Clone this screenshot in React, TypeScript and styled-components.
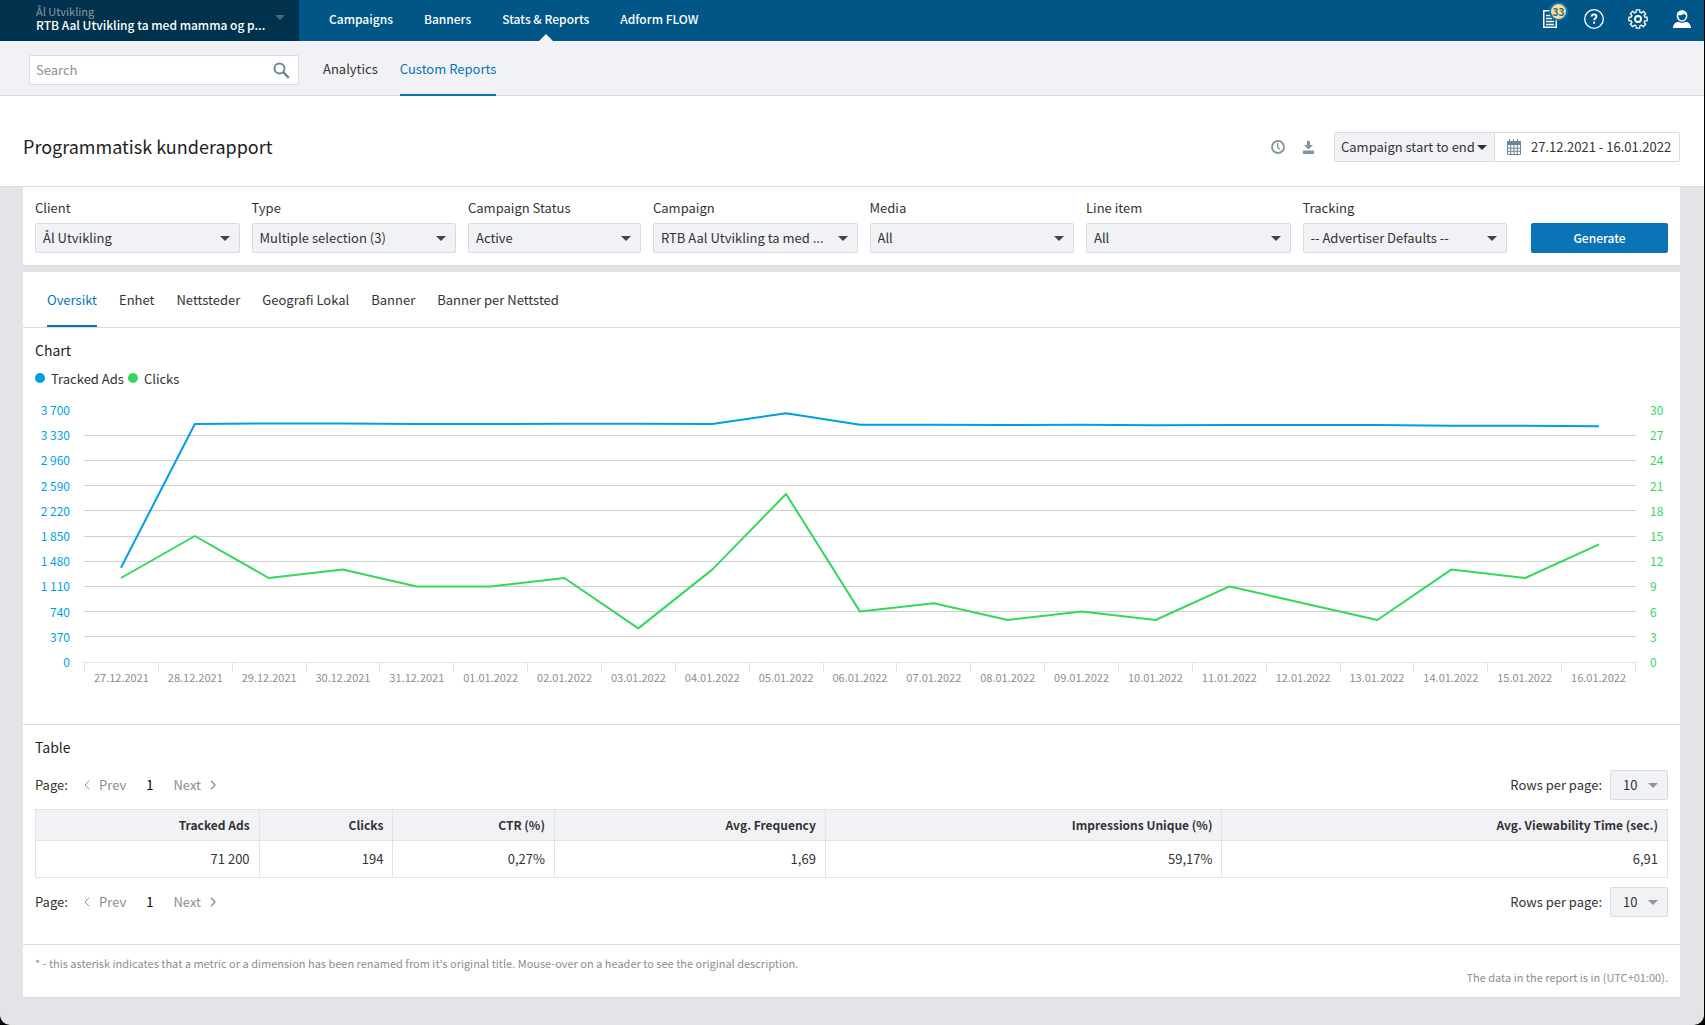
import React from "react";
import styled, { createGlobalStyle } from "styled-components";

const color = {
  nav: "#005687",
  navDark: "#00324d",
  subnav: "#f1f2f6",
  page: "#e3e4e8",
  border: "#d9dbe2",
  line: "#e1e2e6",
  accent: "#0b74b7",
  text: "#333333",
  heading: "#1e1e1e",
  muted: "#8e8e8e",
  icon: "#8197a2",
  ads: "#009fe3",
  clicks: "#37d65c",
};

const GlobalStyle = createGlobalStyle`
  *, *::before, *::after { box-sizing: border-box; }
  html, body { margin: 0; background: #000; }
  body, button, input, select {
    font-family: "Noto Sans CJK SC", "Source Sans Pro", sans-serif;
    font-size: 13px;
    line-height: 20px;
    color: ${color.text};
  }
  button, input, select { margin: 0; padding: 0; border: 0; background: none; border-radius: 0; }
  button, select { cursor: pointer; }
  a { color: inherit; text-decoration: none; }
  h1, h2, p { margin: 0; font-weight: 400; }
  svg { display: block; }
`;

const Shell = styled.div`
  display: flex;
  flex-direction: column;
  min-height: 100vh;
  margin-right: 1px;
  background: ${color.page};
  border-radius: 0 0 10px 10px;
  overflow: hidden;
`;

const TopBar = styled.header`
  display: flex;
  height: 41px;
  background: ${color.nav};
  color: #fff;
`;

const AccountButton = styled.button`
  display: flex;
  align-items: center;
  justify-content: space-between;
  width: 299px;
  padding: 0 14px 6px 36px;
  background: ${color.navDark};
  text-align: left;
  white-space: nowrap;
`;

const AccountNames = styled.span`
  display: flex;
  flex-direction: column;
`;

const AccountClient = styled.span`
  font-size: 11px;
  line-height: 14px;
  color: #8b9ba8;
`;

const AccountCampaign = styled.span`
  font-size: 12px;
  font-weight: 500;
  line-height: 14px;
  color: #fff;
`;

const MainNav = styled.nav`
  display: flex;
  flex: 1;
  gap: 31px;
  padding-left: 30px;
`;

const MainLink = styled.a<{ $active?: boolean }>`
  position: relative;
  font-size: 12px;
  font-weight: 500;
  line-height: 37px;
  &::after {
    content: "";
    display: ${(p) => (p.$active ? "block" : "none")};
    position: absolute;
    left: 50%;
    bottom: 0;
    margin-left: -7px;
    border: 7px solid transparent;
    border-top: 0;
    border-bottom-color: ${color.subnav};
  }
`;

const IconBar = styled.div`
  display: flex;
  align-items: center;
  gap: 22px;
  padding: 0 11px 3px 0;
`;

const IconButton = styled.button`
  position: relative;
  display: flex;
  align-items: center;
  justify-content: center;
  width: 22px;
  height: 22px;
  color: #fff;
`;

const Badge = styled.span`
  position: absolute;
  top: -6px;
  left: 10px;
  width: 19px;
  height: 19px;
  border: 2px solid ${color.accent};
  border-radius: 50%;
  background: #fddb8f;
  color: #1f6f8f;
  font-size: 10px;
  font-weight: 700;
  line-height: 15px;
  text-align: center;
`;

const SubBar = styled.div`
  display: flex;
  height: 55px;
  padding-left: 29px;
  background: ${color.subnav};
  border-bottom: 1px solid ${color.border};
`;

const SearchBox = styled.label`
  display: flex;
  align-items: center;
  align-self: flex-end;
  width: 270px;
  height: 30px;
  padding: 0 8px 0 6px;
  margin: 0 24px 10px 0;
  border: 1px solid ${color.border};
  border-radius: 2px;
  background: #fff;
  color: #6c8896;
`;

const SearchInput = styled.input`
  flex: 1;
  min-width: 0;
  outline: none;
  &::placeholder { color: ${color.muted}; opacity: 1; }
`;

const TabRow = styled.nav<{ $inset?: boolean }>`
  display: flex;
  gap: 22px;
  height: ${(p) => (p.$inset ? "56px" : "55px")};
  padding: ${(p) => (p.$inset ? "0 24px" : "0")};
  border-bottom: ${(p) => (p.$inset ? `1px solid ${color.border}` : "0")};
`;

const TabLink = styled.a<{ $active?: boolean }>`
  padding-top: 18px;
  border-bottom: 2px solid ${(p) => (p.$active ? color.accent : "transparent")};
  color: ${(p) => (p.$active ? color.accent : color.text)};
`;

const TitleBar = styled.div`
  display: flex;
  align-items: center;
  height: 91px;
  padding: 12px 24px 0 23px;
  background: #fff;
  border-bottom: 1px solid ${color.border};
`;

const Title = styled.h1`
  flex: 1;
  padding-bottom: 2px;
  font-size: 18px;
  line-height: 28px;
  color: ${color.heading};
`;

const ToolButton = styled.button`
  display: flex;
  align-items: center;
  justify-content: center;
  width: 20px;
  height: 20px;
  margin-right: 10px;
  color: ${color.icon};
`;

const DateGroup = styled.div`
  display: flex;
  height: 30px;
  margin-left: 6px;
  border: 1px solid ${color.border};
  border-radius: 2px;
`;

const RangeBox = styled.div`
  display: grid;
  align-items: center;
  width: 160px;
  background: ${color.subnav};
  border-right: 1px solid ${color.border};
`;

const DateButton = styled.button`
  display: flex;
  align-items: center;
  gap: 10px;
  width: 184px;
  padding-left: 12px;
  white-space: nowrap;
`;

const Body = styled.main`
  padding: 0 24px 27px 23px;
`;

const Panel = styled.section`
  background: #fff;
  border-bottom: 1px solid ${color.border};
`;

const FilterPanel = styled(Panel)`
  display: grid;
  grid-template-columns: 1fr 1fr 173px 1fr 1fr 1fr 1fr 149px;
  column-gap: 12px;
  align-items: end;
  padding: 11px 12px 12px;
  margin-bottom: 6px;
`;

const Field = styled.label`
  display: flex;
  flex-direction: column;
  gap: 5px;
  min-width: 0;
`;

const SelectBox = styled.span`
  display: grid;
  align-items: center;
  height: 30px;
  border: 1px solid ${color.border};
  border-radius: 2px;
  background: ${color.subnav};
`;

const Select = styled.select<{ $pad: number }>`
  grid-area: 1 / 1;
  width: 100%;
  height: 28px;
  min-width: 0;
  padding-left: ${(p) => p.$pad}px;
  appearance: none;
  outline: none;
`;

const Caret = styled.span<{ $tone: string; $right: number }>`
  grid-area: 1 / 1;
  justify-self: end;
  margin-right: ${(p) => p.$right}px;
  border: 5px solid transparent;
  border-top-color: ${(p) => p.$tone};
  border-bottom: 0;
  pointer-events: none;
`;

const PrimaryButton = styled.button`
  height: 30px;
  margin-left: 12px;
  border-radius: 2px;
  background: ${color.accent};
  color: #fff;
  font-size: 12px;
  font-weight: 500;
`;

const Section = styled.div<{ $bottom: number }>`
  padding: 11px 12px ${(p) => p.$bottom}px;
  border-bottom: 1px solid ${color.border};
`;

const SectionTitle = styled.h2`
  padding-bottom: 2px;
  font-size: 14px;
  line-height: 22px;
  color: ${color.heading};
`;

const Legend = styled.ul`
  display: flex;
  gap: 4px;
  margin: 0;
  padding: 5px 0 12px;
  list-style: none;
`;

const LegendItem = styled.li<{ $tone: string }>`
  display: flex;
  align-items: center;
  gap: 6px;
  line-height: 22px;
  &::before {
    content: "";
    width: 10px;
    height: 10px;
    margin-bottom: 2px;
    border-radius: 50%;
    background: ${(p) => p.$tone};
  }
`;

const ChartRow = styled.div`
  display: flex;
  gap: 14px;
`;

const AxisLabels = styled.div<{ $tone: string; $align: string; $width: number }>`
  display: flex;
  flex-direction: column;
  justify-content: space-between;
  width: ${(p) => p.$width}px;
  height: 268px;
  text-align: ${(p) => p.$align};
  font-size: 12px;
  line-height: 16px;
  white-space: nowrap;
  color: ${(p) => p.$tone};
`;

const Plot = styled.div`
  flex: 1;
  min-width: 0;
  padding-top: 8px;
`;

const PlotSvg = styled.svg`
  width: 100%;
  height: 252px;
  overflow: visible;
`;

const DateAxis = styled.div`
  display: grid;
  grid-template-columns: repeat(21, 1fr);
  border-top: 1px solid ${color.line};
  border-right: 1px solid ${color.line};
  height: 10px;
`;

const DateTick = styled.div`
  display: flex;
  justify-content: center;
  height: 9px;
  padding-top: 6px;
  border-left: 1px solid ${color.line};
  font-size: 11px;
  line-height: 16px;
  color: ${color.muted};
`;

const PagerRow = styled.div`
  display: flex;
  align-items: center;
  justify-content: space-between;
  height: 30px;
`;

const Pager = styled.nav`
  display: flex;
  align-items: center;
`;

const PageStep = styled.button`
  display: flex;
  align-items: center;
  gap: 9px;
  color: ${color.muted};
`;

const PageLabel = styled.span`
  width: 49px;
`;

const PageNumber = styled.span`
  padding: 0 20px;
  color: #000;
`;

const RowsLabel = styled.label`
  display: flex;
  align-items: center;
  gap: 8px;
`;

const RowsBox = styled(SelectBox)`
  width: 58px;
`;

const TableBlock = styled.div`
  display: flex;
  flex-direction: column;
  gap: 9px;
  padding-top: 10px;
`;

const DataTable = styled.table`
  width: 100%;
  border-collapse: collapse;
  table-layout: fixed;
`;

const cell = `
  padding: 0 9px;
  border: 1px solid ${color.line};
  text-align: right;
`;

const HeadCell = styled.th`
  ${cell}
  height: 31px;
  background: ${color.subnav};
  font-size: 12px;
  font-weight: 700;
`;

const BodyCell = styled.td`
  ${cell}
  height: 37px;
`;

const Notes = styled.footer`
  display: flex;
  flex-direction: column;
  padding: 11px 12px 13px;
  font-size: 11px;
  line-height: 14px;
  color: ${color.muted};
`;

const TimeZoneNote = styled.p`
  align-self: flex-end;
`;

const filters = [
  ["Client", "Ål Utvikling"],
  ["Type", "Multiple selection (3)"],
  ["Campaign Status", "Active"],
  ["Campaign", "RTB Aal Utvikling ta med ..."],
  ["Media", "All"],
  ["Line item", "All"],
  ["Tracking", "-- Advertiser Defaults --"],
];

const reportTabs = ["Oversikt", "Enhet", "Nettsteder", "Geografi Lokal", "Banner", "Banner per Nettsted"];

const dates = [
  "27.12.2021", "28.12.2021", "29.12.2021", "30.12.2021", "31.12.2021", "01.01.2022", "02.01.2022",
  "03.01.2022", "04.01.2022", "05.01.2022", "06.01.2022", "07.01.2022", "08.01.2022", "09.01.2022",
  "10.01.2022", "11.01.2022", "12.01.2022", "13.01.2022", "14.01.2022", "15.01.2022", "16.01.2022",
];
const ads = [
  1385, 3495, 3502, 3502, 3494, 3494, 3497, 3497, 3494, 3652, 3483, 3484, 3478, 3484, 3476, 3480, 3480, 3480,
  3467, 3467, 3463,
];
const clicks = [10, 15, 10, 11, 9, 9, 10, 4, 11, 20, 6, 7, 5, 6, 5, 9, 7, 5, 11, 10, 14];
const adsTicks = ["3 700", "3 330", "2 960", "2 590", "2 220", "1 850", "1 480", "1 110", "740", "370", "0"];
const clickTicks = [30, 27, 24, 21, 18, 15, 12, 9, 6, 3, 0];

const columns: [string, string, string][] = [
  ["Tracked Ads", "71 200", "13.7%"],
  ["Clicks", "194", "8.2%"],
  ["CTR (%)", "0,27%", "9.9%"],
  ["Avg. Frequency", "1,69", "16.6%"],
  ["Impressions Unique (%)", "59,17%", "24.3%"],
  ["Avg. Viewability Time (sec.)", "6,91", "27.3%"],
];

const PLOT_W = 2100;
const PLOT_H = 252;

function series(values: number[], max: number) {
  const step = PLOT_W / values.length;
  return values.map((v, i) => `${(i + 0.5) * step},${PLOT_H - (v / max) * PLOT_H}`).join(" ");
}

function Dropdown({ value }: { value: string }) {
  return (
    <SelectBox>
      <Select $pad={7} defaultValue={value}>
        <option>{value}</option>
      </Select>
      <Caret $tone="#444" $right={9} />
    </SelectBox>
  );
}

function Chart() {
  return (
    <ChartRow>
      <AxisLabels $tone={color.ads} $align="right" $width={35}>
        {adsTicks.map((t) => <span key={t}>{t}</span>)}
      </AxisLabels>
      <Plot>
        <PlotSvg viewBox={`0 0 ${PLOT_W} ${PLOT_H}`} preserveAspectRatio="none" role="img" aria-label="Tracked Ads and Clicks per day">
          {clickTicks.slice(1, 10).map((t) => {
            const y = Math.floor(PLOT_H - (t / 30) * PLOT_H) + 0.5;
            return (
              <line key={t} x1="0" x2={PLOT_W} y1={y} y2={y} stroke="#cfcfd1" vectorEffect="non-scaling-stroke" />
            );
          })}
          <polyline points={series(ads, 3700)} fill="none" stroke={color.ads} strokeWidth="2" strokeLinejoin="round" vectorEffect="non-scaling-stroke" />
          <polyline points={series(clicks, 30)} fill="none" stroke={color.clicks} strokeWidth="2" strokeLinejoin="round" vectorEffect="non-scaling-stroke" />
        </PlotSvg>
        <DateAxis>
          {dates.map((d) => <DateTick key={d}>{d}</DateTick>)}
        </DateAxis>
      </Plot>
      <AxisLabels $tone={color.clicks} $align="left" $width={18}>
        {clickTicks.map((t) => <span key={t}>{t}</span>)}
      </AxisLabels>
    </ChartRow>
  );
}

function Paging() {
  return (
    <PagerRow>
      <Pager aria-label="Pages">
        <PageLabel>Page:</PageLabel>
        <PageStep>
          <svg width="6" height="10" viewBox="0 0 6 10" fill="none" stroke="currentColor"><path d="M5 .8 1 5l4 4.200" /></svg>
          Prev
        </PageStep>
        <PageNumber>1</PageNumber>
        <PageStep>
          Next
          <svg width="6" height="10" viewBox="0 0 6 10" fill="none" stroke="currentColor"><path d="m1 .8 4 4.200-4 4.200" strokeWidth="1.300" /></svg>
        </PageStep>
      </Pager>
      <RowsLabel>
        Rows per page:
        <RowsBox>
          <Select $pad={12} defaultValue="10">
            <option>10</option>
          </Select>
          <Caret $tone="#949494" $right={9} />
        </RowsBox>
      </RowsLabel>
    </PagerRow>
  );
}

const gearPath = (() => {
  const pts: string[] = [];
  for (let i = 0; i < 8; i++) {
    const a = (i * Math.PI) / 4;
    ([[-0.27, 7], [-0.19, 9.3], [0.19, 9.3], [0.27, 7]] as [number, number][]).forEach(([d, r]) => {
      pts.push(`${(11 + r * Math.sin(a + d)).toFixed(2)} ${(11 - r * Math.cos(a + d)).toFixed(2)}`);
    });
  }
  return `M${pts.join("L")}Z`;
})();

export default function App() {
  return (
    <>
      <GlobalStyle />
      <Shell>
        <TopBar>
          <AccountButton>
            <AccountNames>
              <AccountClient>Ål Utvikling</AccountClient>
              <AccountCampaign>RTB Aal Utvikling ta med mamma og p...</AccountCampaign>
            </AccountNames>
            <Caret $tone="#44687e" $right={0} />
          </AccountButton>
          <MainNav>
            <MainLink href="#campaigns">Campaigns</MainLink>
            <MainLink href="#banners">Banners</MainLink>
            <MainLink href="#stats" $active>Stats &amp; Reports</MainLink>
            <MainLink href="#flow">Adform FLOW</MainLink>
          </MainNav>
          <IconBar>
            <IconButton aria-label="Notifications">
              <svg width="14" height="18" viewBox="0 0 14 18" fill="none" stroke="currentColor">
                <path d="M.75.75h12.500v16.500H.75z" strokeWidth="1.500" />
                <path d="M3 5.500h5M3 8.500h6M3 11.500h8M3 14.500h8" strokeWidth="1.500" />
              </svg>
              <Badge>33</Badge>
            </IconButton>
            <IconButton aria-label="Help">
              <svg width="22" height="22" viewBox="0 0 22 22" fill="none" stroke="currentColor">
                <circle cx="11" cy="11" r="9.300" strokeWidth="1.300" />
                <path d="M8.500 8.600c.2-1.500 1.200-2.200 2.500-2.200 1.400 0 2.400.8 2.400 2 0 1.700-2.300 1.900-2.300 3.900" strokeWidth="1.900" />
                <path d="M11.100 13.700v2" strokeWidth="2" />
              </svg>
            </IconButton>
            <IconButton aria-label="Settings">
              <svg width="22" height="22" viewBox="0 0 22 22" fill="none" stroke="currentColor">
                <path d={gearPath} strokeWidth="1.300" strokeLinejoin="round" />
                <circle cx="11" cy="11" r="3" strokeWidth="1.800" />
              </svg>
            </IconButton>
            <IconButton aria-label="Profile">
              <svg width="18" height="18" viewBox="0 0 18 18" fill="currentColor">
                <path d="M9 .3c3.200 0 5.300 2.300 5.300 5.400S12.200 11.500 9 11.500 3.700 8.800 3.700 5.700 5.800.3 9 .3Z" />
                <path d="M5.200 5.200c2.700.3 4.600-.2 6-1.700.5 1 1.200 1.500 1.900 1.700-.1 3-1.700 5.100-4.100 5.100S5.300 8.200 5.200 5.200Z" fill={color.nav} />
                <path d="M0 18c0-3.700 2.200-5.500 5.200-6.300 2.300 1.300 5.300 1.300 7.600 0C15.800 12.500 18 14.300 18 18Z" />
              </svg>
            </IconButton>
          </IconBar>
        </TopBar>

        <SubBar>
          <SearchBox>
            <SearchInput type="search" placeholder="Search" aria-label="Search" />
            <svg width="17" height="17" viewBox="0 0 17 17" fill="none" stroke="currentColor">
              <circle cx="6.500" cy="6.500" r="5" strokeWidth="2" />
              <path d="m10.200 10.200 5.600 5.600" strokeWidth="2.400" />
            </svg>
          </SearchBox>
          <TabRow>
            <TabLink href="#analytics">Analytics</TabLink>
            <TabLink href="#custom" $active>Custom Reports</TabLink>
          </TabRow>
        </SubBar>

        <TitleBar>
          <Title>Programmatisk kunderapport</Title>
          <ToolButton aria-label="Schedule">
            <svg width="14" height="14" viewBox="0 0 14 14" fill="none" stroke="currentColor">
              <circle cx="7" cy="7" r="6" strokeWidth="1.800" />
              <path d="M6.700 3v4.300l2.200 2.200" strokeWidth="1.400" />
            </svg>
          </ToolButton>
          <ToolButton aria-label="Download">
            <svg width="11" height="13" viewBox="0 0 11 13" fill="currentColor">
              <path d="M4 0h3v4h3L5.500 8.500 1 4h3zM0 9.500h11V13H0z" />
            </svg>
          </ToolButton>
          <DateGroup>
            <RangeBox>
              <Select $pad={6} aria-label="Period" defaultValue="Campaign start to end">
                <option>Campaign start to end</option>
              </Select>
              <Caret $tone="#333" $right={7} />
            </RangeBox>
            <DateButton>
              <svg width="14" height="16" viewBox="0 0 14 16" fill="#6c8896">
                <path d="M0 2h2V0h1v2h3V0h1v2h3V0h1v2h3v4H0z" />
                <path d="M.5 6v9.500h13V6M3.700 5v10M7 5v10M10.300 5v10M0 9.200h14M0 12.300h14" fill="none" stroke="#6c8896" />
              </svg>
              27.12.2021 - 16.01.2022
            </DateButton>
          </DateGroup>
        </TitleBar>

        <Body>
          <FilterPanel>
            {filters.map(([label, value]) => (
              <Field key={label}>
                {label}
                <Dropdown value={value} />
              </Field>
            ))}
            <PrimaryButton>Generate</PrimaryButton>
          </FilterPanel>

          <Panel>
            <TabRow $inset>
              {reportTabs.map((t, i) => (
                <TabLink key={t} href={`#tab-${i}`} $active={i === 0}>{t}</TabLink>
              ))}
            </TabRow>
            <Section $bottom={52}>
              <SectionTitle>Chart</SectionTitle>
              <Legend>
                <LegendItem $tone={color.ads}>Tracked Ads</LegendItem>
                <LegendItem $tone={color.clicks}>Clicks</LegendItem>
              </Legend>
              <Chart />
            </Section>
            <Section $bottom={27}>
              <SectionTitle>Table</SectionTitle>
              <TableBlock>
                <Paging />
                <DataTable>
                  <colgroup>
                    {columns.map(([name, , width]) => <col key={name} style={{ width }} />)}
                  </colgroup>
                  <thead>
                    <tr>{columns.map(([name]) => <HeadCell key={name} scope="col">{name}</HeadCell>)}</tr>
                  </thead>
                  <tbody>
                    <tr>{columns.map(([name, value]) => <BodyCell key={name}>{value}</BodyCell>)}</tr>
                  </tbody>
                </DataTable>
                <Paging />
              </TableBlock>
            </Section>
            <Notes>
              <p>* - this asterisk indicates that a metric or a dimension has been renamed from it's original title. Mouse-over on a header to see the original description.</p>
              <TimeZoneNote>The data in the report is in (UTC+01:00).</TimeZoneNote>
            </Notes>
          </Panel>
        </Body>
      </Shell>
    </>
  );
}
